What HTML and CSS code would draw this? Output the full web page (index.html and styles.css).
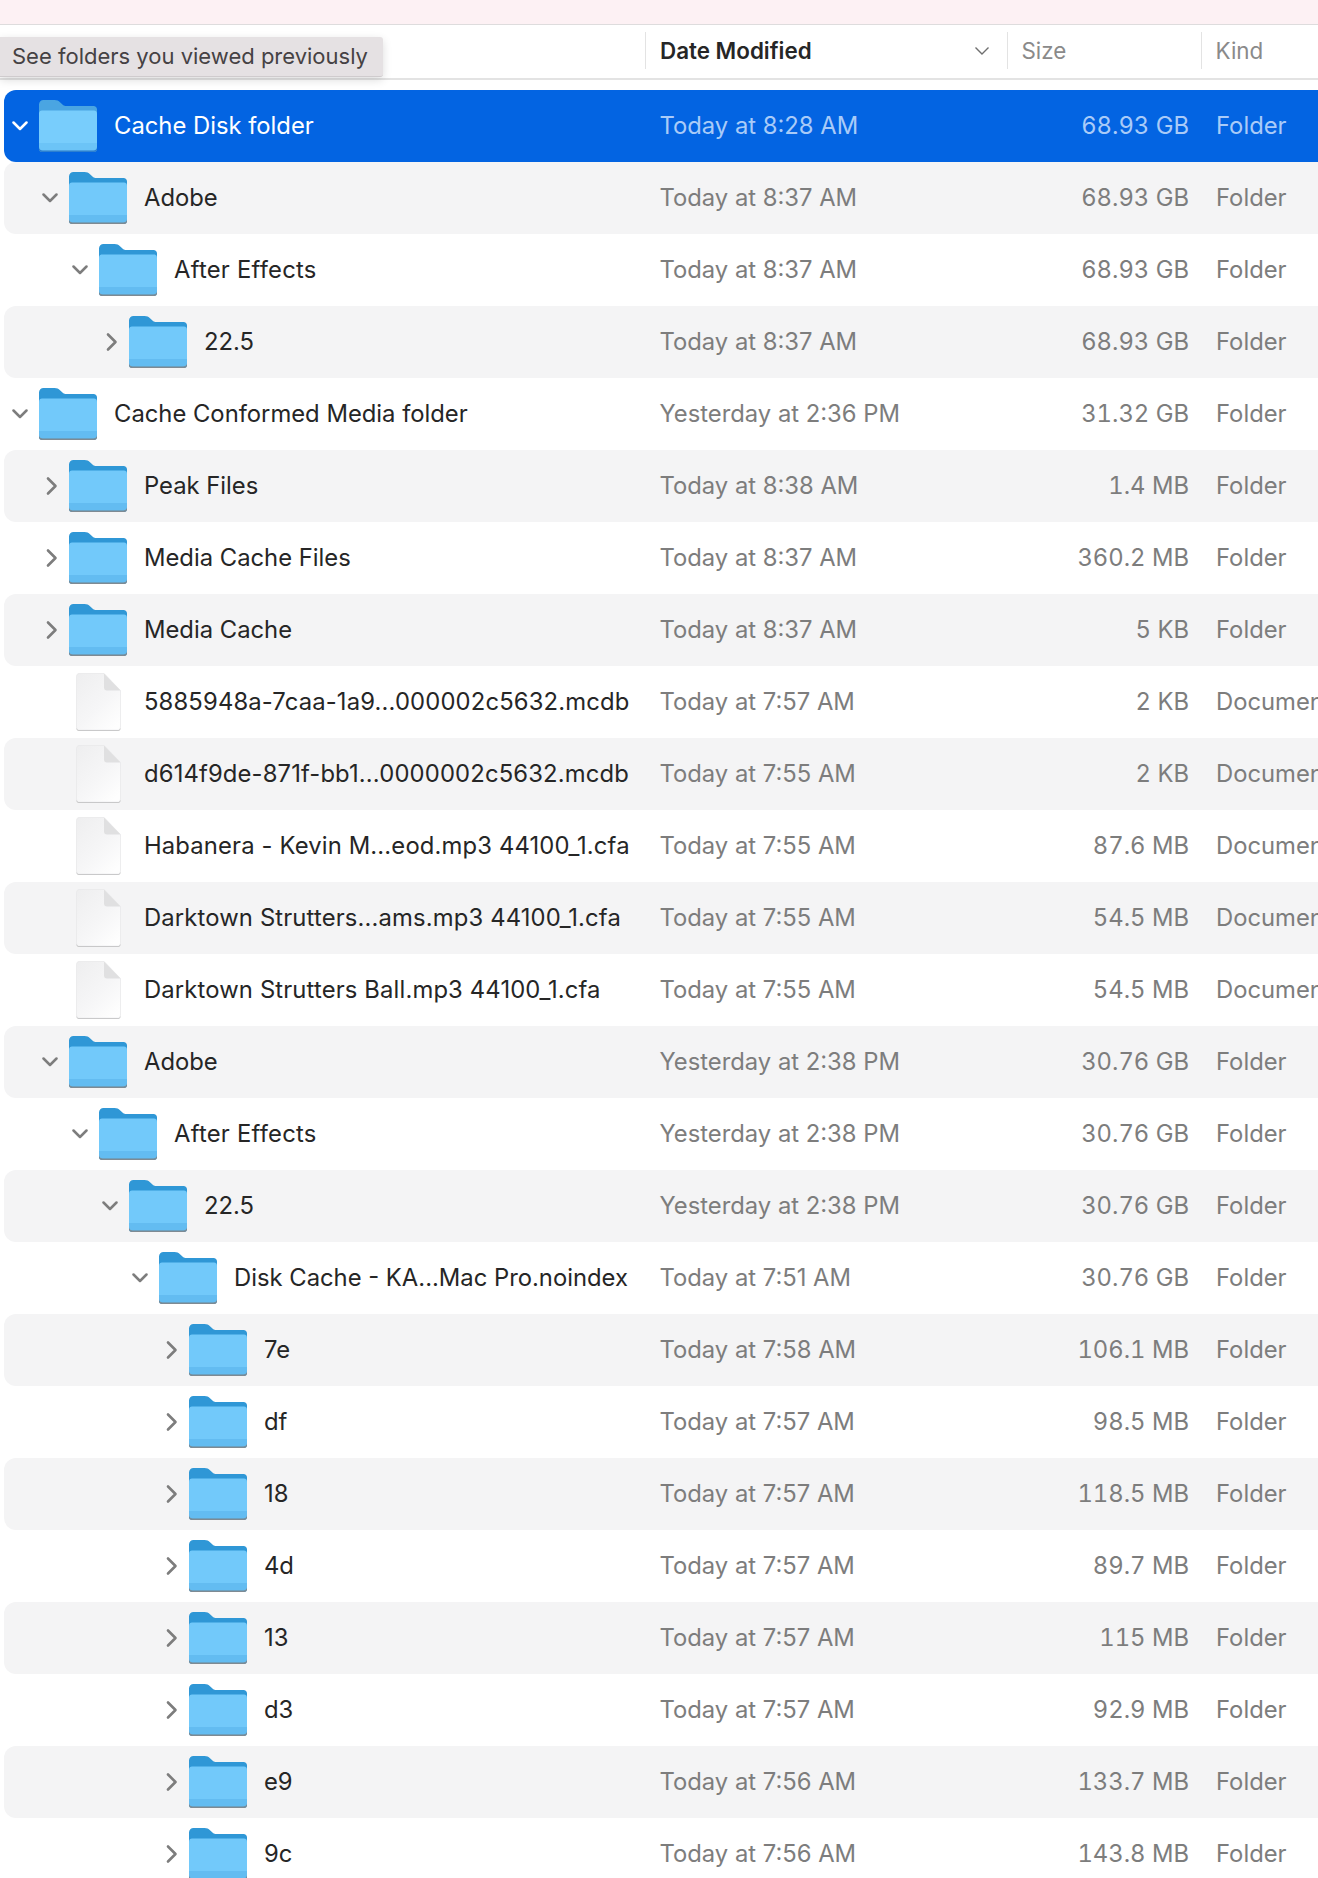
FILE: index.html
```html
<!DOCTYPE html>
<html lang="en">
<head>
<meta charset="utf-8">
<title>Finder list</title>
<link rel="stylesheet" href="styles.css">
</head>
<body>
<svg class="defs" width="0" height="0" aria-hidden="true">
  <defs>
    <linearGradient id="docfill" x1="0" y1="0" x2="0.8" y2="1">
      <stop offset="0" stop-color="#eeeeef"/>
      <stop offset="0.6" stop-color="#f6f6f7"/>
      <stop offset="1" stop-color="#fefefe"/>
    </linearGradient>
    <linearGradient id="frontfill" x1="0" y1="0" x2="0" y2="1">
      <stop offset="0" stop-color="var(--front-top)"/>
      <stop offset="1" stop-color="var(--front)"/>
    </linearGradient>
    <symbol id="folder" viewBox="0 0 58 52">
      <path d="M0 49V4.500C0 2 2 0 4.500 0H15.500C18 0 19.500 .8 21 2.300L24 5C25 5.800 26 6 27.500 6H54.500C56.500 6 58 7.500 58 9.500V49C58 50.700 56.700 52 55 52H3C1.300 52 0 50.700 0 49Z" fill="var(--tab)"/>
      <path d="M0 47V13.500C0 11.800 1.300 10.500 3 10.500H55C56.700 10.500 58 11.800 58 13.500V47C58 49 56.500 50.500 54.500 50.500H3.500C1.500 50.500 0 49 0 47Z" fill="var(--front)"/>
      <path d="M0 43H58V47C58 49 56.500 50.500 54.500 50.500H3.500C1.500 50.500 0 49 0 47Z" fill="var(--band)"/>
      <path d="M0 47C0 49 1.500 50.500 3.500 50.500H54.500C56.500 50.500 58 49 58 47V49C58 50.700 56.700 52 55 52H3C1.300 52 0 50.700 0 49Z" fill="var(--edge)"/>
    </symbol>
    <symbol id="doc" viewBox="0 0 45 58">
      <path d="M3 .5H28L44.500 17.500V54C44.500 55.900 43 57.200 41.500 57.200H3.500C1.800 57.200 .5 55.900 .5 54V3.500C.5 1.800 1.500 .5 3 .5Z" fill="url(#docfill)" stroke="#e9e9ea" stroke-width=".8"/>
      <path d="M.5 54.500C.5 56 1.800 57.300 3.500 57.300H41.500C43.200 57.300 44.500 56 44.500 54.500V56C44.500 57 43 58 41.500 58H3.500C2 58 .5 57 .5 56Z" fill="#bcbcbd"/>
      <path d="M28 .5V14.500C28 16.200 29 17.500 31 17.500H44.500Z" fill="#e0e0e1"/>
    </symbol>
    <symbol id="chev-down" viewBox="0 0 16 10">
      <path d="M1.500 1.500L8 8L14.500 1.500" fill="none" stroke="currentColor" stroke-width="2.500" stroke-linecap="round" stroke-linejoin="round"/>
    </symbol>
    <symbol id="chev-right" viewBox="0 0 16 20">
      <path d="M6 2.500L13.500 10L6 17.500" fill="none" stroke="currentColor" stroke-width="2.600" stroke-linecap="round" stroke-linejoin="round"/>
    </symbol>
  </defs>
</svg>

<main class="window">
  <div class="topbar"></div>
  <div class="tooltip">See folders you viewed previously</div>
  <header class="head">
    <div class="hcol hcol-date"><span class="hlabel-active">Date Modified</span>
      <svg class="sort" viewBox="0 0 16 10"><path d="M1.500 1.500L8 8L14.500 1.500" fill="none" stroke="currentColor" stroke-width="1.400"/></svg>
    </div>
    <div class="hcol hcol-size">Size</div>
    <div class="hcol hcol-kind">Kind</div>
  </header>

  <section class="list">
    <div class="row selected"><div class="tree l0"><svg class="chev cd"><use href="#chev-down"/></svg><svg class="ico"><use href="#folder"/></svg><span class="name">Cache Disk folder</span></div><span class="date">Today at 8:28 AM</span><span class="size">68.93 GB</span><span class="kind">Folder</span></div>
    <div class="row alt"><div class="tree l1"><svg class="chev cd"><use href="#chev-down"/></svg><svg class="ico"><use href="#folder"/></svg><span class="name">Adobe</span></div><span class="date">Today at 8:37 AM</span><span class="size">68.93 GB</span><span class="kind">Folder</span></div>
    <div class="row"><div class="tree l2"><svg class="chev cd"><use href="#chev-down"/></svg><svg class="ico"><use href="#folder"/></svg><span class="name wide">After Effects</span></div><span class="date">Today at 8:37 AM</span><span class="size">68.93 GB</span><span class="kind">Folder</span></div>
    <div class="row alt"><div class="tree l3"><svg class="chev cr"><use href="#chev-right"/></svg><svg class="ico"><use href="#folder"/></svg><span class="name">22.5</span></div><span class="date">Today at 8:37 AM</span><span class="size">68.93 GB</span><span class="kind">Folder</span></div>
    <div class="row"><div class="tree l0"><svg class="chev cd"><use href="#chev-down"/></svg><svg class="ico"><use href="#folder"/></svg><span class="name">Cache Conformed Media folder</span></div><span class="date">Yesterday at 2:36 PM</span><span class="size">31.32 GB</span><span class="kind">Folder</span></div>
    <div class="row alt"><div class="tree l1"><svg class="chev cr"><use href="#chev-right"/></svg><svg class="ico"><use href="#folder"/></svg><span class="name">Peak Files</span></div><span class="date">Today at 8:38 AM</span><span class="size">1.4 MB</span><span class="kind">Folder</span></div>
    <div class="row"><div class="tree l1"><svg class="chev cr"><use href="#chev-right"/></svg><svg class="ico"><use href="#folder"/></svg><span class="name">Media Cache Files</span></div><span class="date">Today at 8:37 AM</span><span class="size">360.2 MB</span><span class="kind">Folder</span></div>
    <div class="row alt"><div class="tree l1"><svg class="chev cr"><use href="#chev-right"/></svg><svg class="ico"><use href="#folder"/></svg><span class="name">Media Cache</span></div><span class="date">Today at 8:37 AM</span><span class="size">5 KB</span><span class="kind">Folder</span></div>
    <div class="row"><div class="tree l1"><span class="chev"></span><span class="ico docbox"><svg class="docico"><use href="#doc"/></svg></span><span class="name file">5885948a-7caa-1a9...000002c5632.mcdb</span></div><span class="date">Today at 7:57 AM</span><span class="size">2 KB</span><span class="kind">Document</span></div>
    <div class="row alt"><div class="tree l1"><span class="chev"></span><span class="ico docbox"><svg class="docico"><use href="#doc"/></svg></span><span class="name file">d614f9de-871f-bb1...0000002c5632.mcdb</span></div><span class="date">Today at 7:55 AM</span><span class="size">2 KB</span><span class="kind">Document</span></div>
    <div class="row"><div class="tree l1"><span class="chev"></span><span class="ico docbox"><svg class="docico"><use href="#doc"/></svg></span><span class="name file">Habanera - Kevin M...eod.mp3 44100_1.cfa</span></div><span class="date">Today at 7:55 AM</span><span class="size">87.6 MB</span><span class="kind">Document</span></div>
    <div class="row alt"><div class="tree l1"><span class="chev"></span><span class="ico docbox"><svg class="docico"><use href="#doc"/></svg></span><span class="name file">Darktown Strutters...ams.mp3 44100_1.cfa</span></div><span class="date">Today at 7:55 AM</span><span class="size">54.5 MB</span><span class="kind">Document</span></div>
    <div class="row"><div class="tree l1"><span class="chev"></span><span class="ico docbox"><svg class="docico"><use href="#doc"/></svg></span><span class="name file">Darktown Strutters Ball.mp3 44100_1.cfa</span></div><span class="date">Today at 7:55 AM</span><span class="size">54.5 MB</span><span class="kind">Document</span></div>
    <div class="row alt"><div class="tree l1"><svg class="chev cd"><use href="#chev-down"/></svg><svg class="ico"><use href="#folder"/></svg><span class="name">Adobe</span></div><span class="date">Yesterday at 2:38 PM</span><span class="size">30.76 GB</span><span class="kind">Folder</span></div>
    <div class="row"><div class="tree l2"><svg class="chev cd"><use href="#chev-down"/></svg><svg class="ico"><use href="#folder"/></svg><span class="name wide">After Effects</span></div><span class="date">Yesterday at 2:38 PM</span><span class="size">30.76 GB</span><span class="kind">Folder</span></div>
    <div class="row alt"><div class="tree l3"><svg class="chev cd"><use href="#chev-down"/></svg><svg class="ico"><use href="#folder"/></svg><span class="name">22.5</span></div><span class="date">Yesterday at 2:38 PM</span><span class="size">30.76 GB</span><span class="kind">Folder</span></div>
    <div class="row"><div class="tree l4"><svg class="chev cd"><use href="#chev-down"/></svg><svg class="ico"><use href="#folder"/></svg><span class="name">Disk Cache - KA...Mac Pro.noindex</span></div><span class="date">Today at 7:51 AM</span><span class="size">30.76 GB</span><span class="kind">Folder</span></div>
    <div class="row alt"><div class="tree l5"><svg class="chev cr"><use href="#chev-right"/></svg><svg class="ico"><use href="#folder"/></svg><span class="name">7e</span></div><span class="date">Today at 7:58 AM</span><span class="size">106.1 MB</span><span class="kind">Folder</span></div>
    <div class="row"><div class="tree l5"><svg class="chev cr"><use href="#chev-right"/></svg><svg class="ico"><use href="#folder"/></svg><span class="name">df</span></div><span class="date">Today at 7:57 AM</span><span class="size">98.5 MB</span><span class="kind">Folder</span></div>
    <div class="row alt"><div class="tree l5"><svg class="chev cr"><use href="#chev-right"/></svg><svg class="ico"><use href="#folder"/></svg><span class="name">18</span></div><span class="date">Today at 7:57 AM</span><span class="size">118.5 MB</span><span class="kind">Folder</span></div>
    <div class="row"><div class="tree l5"><svg class="chev cr"><use href="#chev-right"/></svg><svg class="ico"><use href="#folder"/></svg><span class="name">4d</span></div><span class="date">Today at 7:57 AM</span><span class="size">89.7 MB</span><span class="kind">Folder</span></div>
    <div class="row alt"><div class="tree l5"><svg class="chev cr"><use href="#chev-right"/></svg><svg class="ico"><use href="#folder"/></svg><span class="name">13</span></div><span class="date">Today at 7:57 AM</span><span class="size">115 MB</span><span class="kind">Folder</span></div>
    <div class="row"><div class="tree l5"><svg class="chev cr"><use href="#chev-right"/></svg><svg class="ico"><use href="#folder"/></svg><span class="name">d3</span></div><span class="date">Today at 7:57 AM</span><span class="size">92.9 MB</span><span class="kind">Folder</span></div>
    <div class="row alt"><div class="tree l5"><svg class="chev cr"><use href="#chev-right"/></svg><svg class="ico"><use href="#folder"/></svg><span class="name">e9</span></div><span class="date">Today at 7:56 AM</span><span class="size">133.7 MB</span><span class="kind">Folder</span></div>
    <div class="row"><div class="tree l5"><svg class="chev cr"><use href="#chev-right"/></svg><svg class="ico"><use href="#folder"/></svg><span class="name">9c</span></div><span class="date">Today at 7:56 AM</span><span class="size">143.8 MB</span><span class="kind">Folder</span></div>
  </section>
</main>
</body>
</html>
```

FILE: styles.css
```css
* { box-sizing: border-box; }
html, body {
  margin: 0;
  padding: 0;
  height: 1878px;
  overflow: hidden;
  background: #fff;
}
body {
  font-family: Inter, "Liberation Sans", sans-serif;
  font-size: 23.800px;
  color: #262626;
}
.defs { position: absolute; }
.window {
  position: relative;
  height: 1878px;
  overflow: hidden;
  --tab: #2f97d6;
  --front: #72c9fa;
  --band: #63bcf1;
  --edge: #7f8a92;
}
.topbar {
  height: 25px;
  background: #fdf1f4;
  border-bottom: 1px solid #dedcdd;
}
.tooltip {
  position: absolute;
  left: 0;
  top: 37px;
  width: 383px;
  height: 40px;
  padding-left: 12px;
  line-height: 38px;
  font-size: 22px;
  color: #454244;
  background: #e5e1e3;
  border-radius: 0 3px 3px 0;
  border-bottom: 1px solid #cfcbcd;
  box-shadow: 0 3px 10px rgba(0, 0, 0, .14);
  z-index: 2;
}
.head {
  display: flex;
  height: 55px;
  padding: 7px 0 9px 645px;
  border-bottom: 2px solid #e3e3e3;
  font-size: 22.400px;
  color: #8a8a8a;
}
.hcol {
  display: flex;
  align-items: center;
  padding-left: 14px;
  border-left: 1.500px solid #e3e3e3;
}
.hcol-date { flex: none; width: 361.500px; padding-right: 17px; justify-content: space-between; }
.hcol-size { flex: none; width: 194px; }
.hcol-kind { flex: 1; }
.hlabel-active { font-weight: 600; color: #262626; }
.sort { width: 16px; height: 10px; color: #6f6f6f; }
.list { padding: 10px 0 0 4px; }
.row {
  display: grid;
  grid-template-columns: 655.500px 350.500px 179px 1fr;
  align-items: center;
  height: 72px;
  width: 1400px;
  border-radius: 12px 0 0 12px;
  color: #7d7d7d;
}
.alt { background: #f4f4f5; }
.selected {
  background: #0364e2;
  color: #a9cbf8;
  --tab: #4aa5e2;
  --front: #78cdfc;
  --band: #6cc4f7;
  --edge: #2d7fd0;
}
.tree { display: flex; align-items: center; color: #262626; }
.selected .tree { color: #fff; }
.l0 { padding-left: 8px; }
.l1 { padding-left: 38px; }
.l2 { padding-left: 68px; }
.l3 { padding-left: 98px; }
.l4 { padding-left: 128px; }
.l5 { padding-left: 158px; }
.chev { flex: none; width: 16px; color: #7d7d7d; }
.cd { height: 10px; }
.cr { height: 20px; }
.selected .chev { color: #fff; }
.ico { flex: none; width: 58px; height: 52px; margin: 0 17px 0 11px; }
.docbox { height: 58px; display: flex; justify-content: center; }
.docico { width: 45px; height: 58px; }
.name, .date, .size, .kind { white-space: nowrap; margin-bottom: 2px; }
.file { letter-spacing: .15px; }
.wide { letter-spacing: .25px; }
.size { font-variant-numeric: tabular-nums; text-align: right; }
.kind { padding-left: 27px; }
```
